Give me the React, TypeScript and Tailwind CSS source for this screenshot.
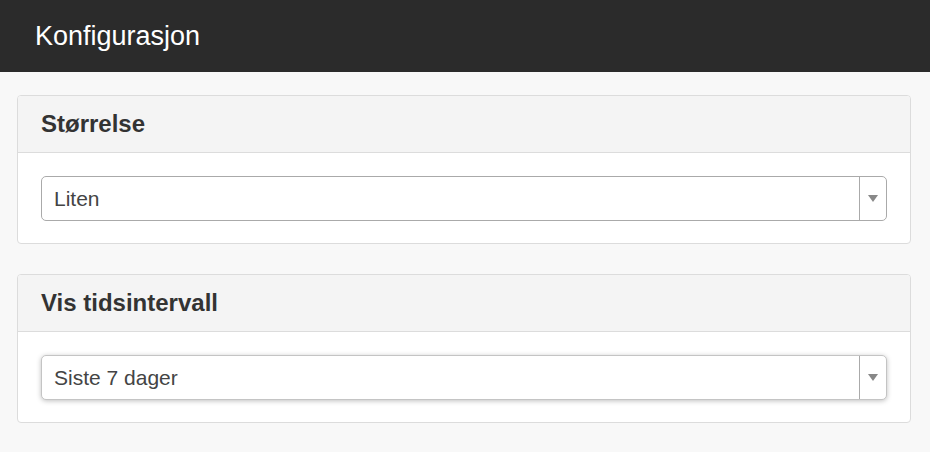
import React from "react";

const SECTIONS = [
  { title: "Størrelse", value: "Liten", focused: false },
  { title: "Vis tidsintervall", value: "Siste 7 dager", focused: true },
];

function Select({ value, focused }: { value: string; focused: boolean }) {
  return (
    <div
      className={
        "flex h-[45px] items-stretch rounded-[5px] border bg-white " +
        (focused
          ? "border-[#c4c4c4] shadow-[0_1px_5px_rgba(0,0,0,0.25)]"
          : "border-[#aaa]")
      }
    >
      <span className="flex flex-1 items-center pl-[12px] text-[21px] text-[#444]">
        {value}
      </span>
      <span className="flex w-[27px] items-center justify-center border-l border-[#aaa]">
        <svg width="10" height="7" viewBox="0 0 10 7">
          <path d="M0 0 L10 0 L5 7 Z" fill="#888" />
        </svg>
      </span>
    </div>
  );
}

export default function App() {
  return (
    <div
      className="min-h-[452px] bg-[#f8f8f8]"
      style={{ fontFamily: '"Liberation Sans", Arial, sans-serif' }}
    >
      <header className="flex h-[72px] items-center bg-[#2b2b2b] pl-[35px]">
        <h1 className="text-[27px] text-white">Konfigurasjon</h1>
      </header>

      <main className="flex flex-col gap-[30px] pl-[17px] pr-[19px] pt-[23px]">
        {SECTIONS.map(({ title, value, focused }) => (
          <section
            key={title}
            className="overflow-hidden rounded-[4px] border border-[#dcdcdc] bg-white"
          >
            <div className="flex h-[57px] items-center border-b border-[#dcdcdc] bg-[#f4f4f4] px-[23px]">
              <h2 className="text-[24px] font-bold text-[#333]">{title}</h2>
            </div>
            <div className="px-[23px] pb-[22px] pt-[23px]">
              <Select value={value} focused={focused} />
            </div>
          </section>
        ))}
      </main>
    </div>
  );
}
